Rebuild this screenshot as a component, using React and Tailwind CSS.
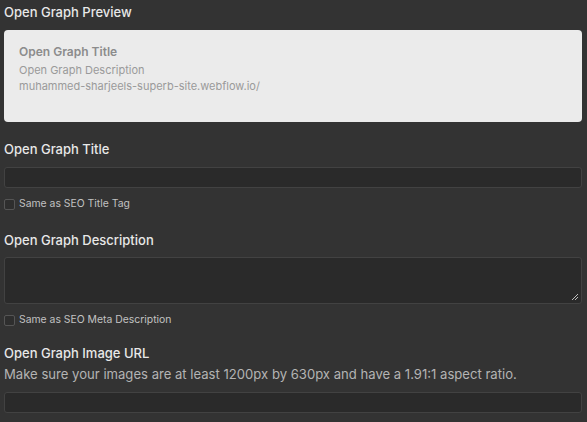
export default function App() {
  const font = { fontFamily: 'Inter, "Noto Sans", sans-serif' };
  return (
    <div className="w-[587px] h-[422px] overflow-hidden bg-[#333333] px-[4px] pr-[5px]" style={font}>
      <div className="pt-[4px] h-[30px] text-[13px] leading-[16px] font-medium text-[#e8e8e8]">Open Graph Preview</div>
      <div className="h-[92px] rounded-[4px] bg-[#ebebeb] px-[15px] pt-[14px]">
        <div className="text-[12px] leading-[16px] font-semibold text-[#8c8c8c]">Open Graph Title</div>
        <div className="mt-[2px] text-[11px] leading-[16px] text-[#9a9a9a]">Open Graph Description</div>
        <div className="text-[11px] leading-[16px] text-[#9a9a9a]">muhammed-sharjeels-superb-site.webflow.io/</div>
      </div>
      <div className="mt-[19px] h-[16px] text-[13px] leading-[16px] font-medium text-[#e8e8e8]">Open Graph Title</div>
      <div className="mt-[10px] h-[21px] rounded-[3px] bg-[#2a2a2a] border border-[#424242]"></div>
      <label className="mt-[10px] flex items-center gap-[4px] h-[12px]">
        <span className="w-[11px] h-[11px] rounded-[2px] border border-[#555555] bg-[#2e2e2e]"></span>
        <span className="text-[10.4px] leading-[12px] text-[#c2c2c2]">Same as SEO Title Tag</span>
      </label>
      <div className="mt-[22px] h-[16px] text-[13px] leading-[16px] font-medium text-[#e8e8e8]">Open Graph Description</div>
      <div className="mt-[9px] relative h-[47px] rounded-[3px] bg-[#2a2a2a] border border-[#424242]">
        <svg className="absolute right-[2px] bottom-[2px]" width="8" height="8" viewBox="0 0 8 8">
          <path d="M7 1L1 7M7 4L4 7" stroke="#bdbdbd" strokeWidth="1" fill="none" />
        </svg>
      </div>
      <label className="mt-[10px] flex items-center gap-[4px] h-[12px]">
        <span className="w-[11px] h-[11px] rounded-[2px] border border-[#555555] bg-[#2e2e2e]"></span>
        <span className="text-[10.4px] leading-[12px] text-[#c2c2c2]">Same as SEO Meta Description</span>
      </label>
      <div className="mt-[19px] h-[16px] text-[13px] leading-[16px] font-medium text-[#e8e8e8]">Open Graph Image URL</div>
      <div className="mt-[5px] h-[16px] text-[13.1px] leading-[16px] text-[#b4b4b4]">Make sure your images are at least 1200px by 630px and have a 1.91:1 aspect ratio.</div>
      <div className="mt-[10px] h-[21px] rounded-[3px] bg-[#2a2a2a] border border-[#424242]"></div>
    </div>
  );
}
